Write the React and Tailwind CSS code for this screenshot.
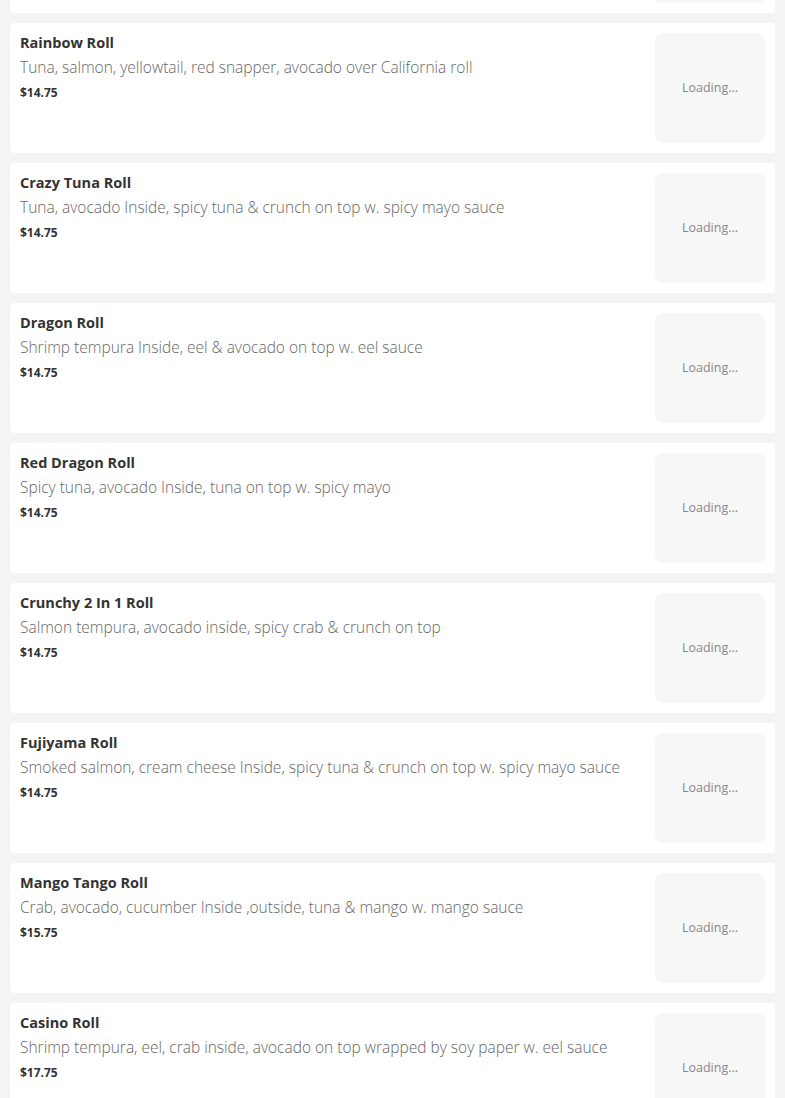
const rolls = [
  { name: 'Rainbow Roll', desc: 'Tuna, salmon, yellowtail, red snapper, avocado over California roll', price: '$14.75' },
  { name: 'Crazy Tuna Roll', desc: 'Tuna, avocado Inside, spicy tuna & crunch on top w. spicy mayo sauce', price: '$14.75' },
  { name: 'Dragon Roll', desc: 'Shrimp tempura Inside, eel & avocado on top w. eel sauce', price: '$14.75' },
  { name: 'Red Dragon Roll', desc: 'Spicy tuna, avocado Inside, tuna on top w. spicy mayo', price: '$14.75' },
  { name: 'Crunchy 2 In 1 Roll', desc: 'Salmon tempura, avocado inside, spicy crab & crunch on top', price: '$14.75' },
  { name: 'Fujiyama Roll', desc: 'Smoked salmon, cream cheese Inside, spicy tuna & crunch on top w. spicy mayo sauce', price: '$14.75' },
  { name: 'Mango Tango Roll', desc: 'Crab, avocado, cucumber Inside ,outside, tuna & mango w. mango sauce', price: '$15.75' },
  { name: 'Casino Roll', desc: 'Shrimp tempura, eel, crab inside, avocado on top wrapped by soy paper w. eel sauce', price: '$17.75' },
];

const MenuCard = ({ name, desc, price }) => (
  <div className="flex h-[130px] shrink-0 justify-between rounded bg-white p-[10px]">
    <div className="flex flex-col pt-[1px]">
      <h3 className="text-[14.5px] leading-[18px] font-bold text-[#333]">{name}</h3>
      <p className="mt-[6px] text-[15.5px] leading-[18px] font-light text-[#666]">{desc}</p>
      <span className="mt-[8px] text-[12px] leading-[18px] font-bold text-[#333]">{price}</span>
    </div>
    <div className="flex h-[110px] w-[110px] shrink-0 items-center justify-center rounded-lg bg-[#f7f7f7] text-[12.5px] text-[#888]">
      Loading...
    </div>
  </div>
);

const App = () => {
  return (
    <div
      className="flex h-[1098px] flex-col gap-[10px] overflow-hidden bg-[#f4f4f4] px-[10px]"
      style={{ fontFamily: '"Open Sans", "Liberation Sans", sans-serif' }}
    >
      {/* bottom of the previous card, scrolled out of view */}
      <div className="flex h-[13px] shrink-0 justify-end rounded-b bg-white pr-[10px]">
        <div className="h-[3px] w-[110px] rounded-b-lg bg-[#f7f7f7]" />
      </div>
      {rolls.map((r) => (
        <MenuCard key={r.name} {...r} />
      ))}
    </div>
  );
};

export default App;
